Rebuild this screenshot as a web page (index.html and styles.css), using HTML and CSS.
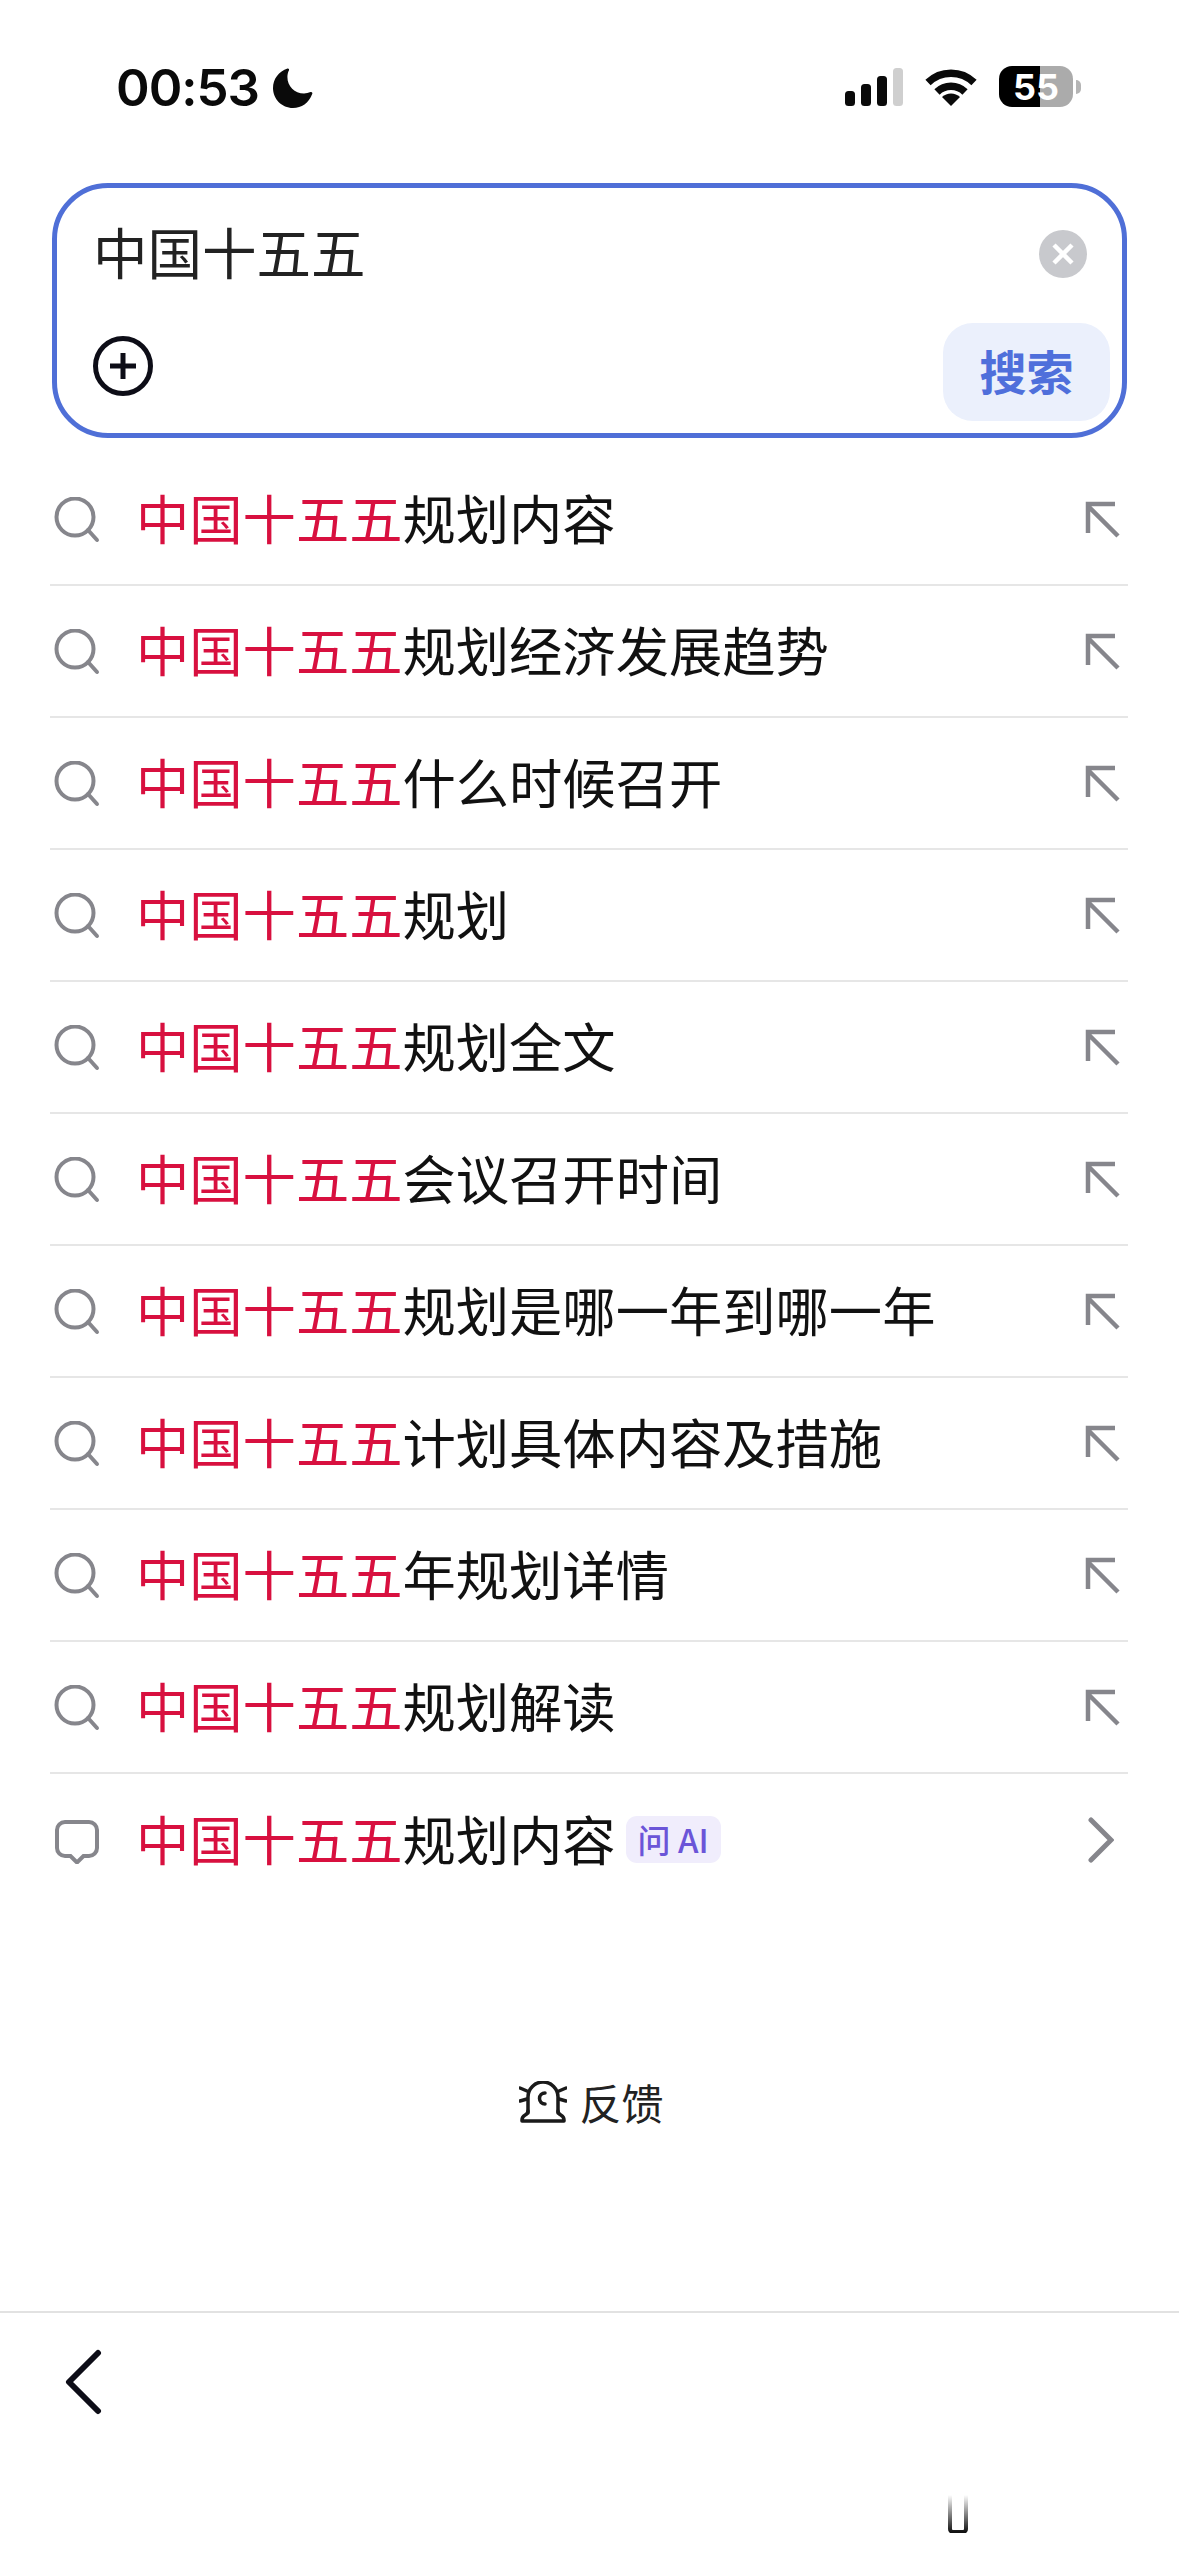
FILE: index.html
```html
<!DOCTYPE html>
<html lang="zh-CN">
<head>
<meta charset="utf-8">
<title>搜索</title>
<link rel="stylesheet" href="styles.css">
</head>
<body>
<div class="page">
  <header class="status">
    <div class="status-left">
      <span class="time">00:53</span>
      <svg class="moon" viewBox="0 0 40 40"><path d="M14.5 0.5C15.6 0.2 16.4 1.2 16 2.2C14.9 4.2 14.4 6.6 14.4 9C14.4 18.300 21.600 25.500 31 25.500C33.300 25.500 35.500 25 37.500 24.100C38.800 23.600 39.900 24.800 39.200 26C35.700 35.300 28.600 40 20 40C8.900 40 0 31.100 0 20C0 11 5.900 3.200 14.500 0.500Z"/></svg>
    </div>
    <div class="status-right">
      <svg class="signal" viewBox="0 0 58 38"><rect x="0" y="23" width="10" height="15" rx="3.500"/><rect x="16" y="16" width="10" height="22" rx="3.500"/><rect x="32" y="8" width="10" height="30" rx="3.500"/><rect class="signal-off" x="48" y="0" width="10" height="38" rx="3.500"/></svg>
      <svg class="wifi" viewBox="0 0 52 38"><path class="wifi-arc" d="M3 14.500A33 33 0 0 1 49 14.500"/><path class="wifi-arc" d="M12 24A20 20 0 0 1 40 24"/><path d="M17 29A13 13 0 0 1 35 29L26 38Z"/></svg>
      <div class="battery">
        <div class="battery-body"><span class="battery-num">55</span></div>
        <span class="battery-nub"></span>
      </div>
    </div>
  </header>

  <section class="search">
    <div class="search-top">
      <span class="query">中国十五五</span>
      <svg class="clear" viewBox="0 0 48 48"><circle cx="24" cy="24" r="24"/><path d="M15 15L33 33M33 15L15 33"/></svg>
    </div>
    <div class="search-bottom">
      <svg class="plus" viewBox="0 0 60 60"><circle cx="30" cy="30" r="27.500"/><path d="M17 30H43M30 17V43"/></svg>
      <button class="search-btn"><span class="search-btn-text">搜索</span></button>
    </div>
  </section>

  <ul class="list">
    <li class="row"><svg class="lead" viewBox="0 0 46 46"><circle cx="21" cy="20" r="18.500"/><path d="M34 33L43 43"/></svg><span class="label"><em>中国十五五</em>规划内容</span><svg class="arrow" viewBox="0 0 36 38"><path d="M33 35L3 5M3 32V3H30"/></svg></li>
    <li class="row"><svg class="lead" viewBox="0 0 46 46"><circle cx="21" cy="20" r="18.500"/><path d="M34 33L43 43"/></svg><span class="label"><em>中国十五五</em>规划经济发展趋势</span><svg class="arrow" viewBox="0 0 36 38"><path d="M33 35L3 5M3 32V3H30"/></svg></li>
    <li class="row"><svg class="lead" viewBox="0 0 46 46"><circle cx="21" cy="20" r="18.500"/><path d="M34 33L43 43"/></svg><span class="label"><em>中国十五五</em>什么时候召开</span><svg class="arrow" viewBox="0 0 36 38"><path d="M33 35L3 5M3 32V3H30"/></svg></li>
    <li class="row"><svg class="lead" viewBox="0 0 46 46"><circle cx="21" cy="20" r="18.500"/><path d="M34 33L43 43"/></svg><span class="label"><em>中国十五五</em>规划</span><svg class="arrow" viewBox="0 0 36 38"><path d="M33 35L3 5M3 32V3H30"/></svg></li>
    <li class="row"><svg class="lead" viewBox="0 0 46 46"><circle cx="21" cy="20" r="18.500"/><path d="M34 33L43 43"/></svg><span class="label"><em>中国十五五</em>规划全文</span><svg class="arrow" viewBox="0 0 36 38"><path d="M33 35L3 5M3 32V3H30"/></svg></li>
    <li class="row"><svg class="lead" viewBox="0 0 46 46"><circle cx="21" cy="20" r="18.500"/><path d="M34 33L43 43"/></svg><span class="label"><em>中国十五五</em>会议召开时间</span><svg class="arrow" viewBox="0 0 36 38"><path d="M33 35L3 5M3 32V3H30"/></svg></li>
    <li class="row"><svg class="lead" viewBox="0 0 46 46"><circle cx="21" cy="20" r="18.500"/><path d="M34 33L43 43"/></svg><span class="label"><em>中国十五五</em>规划是哪一年到哪一年</span><svg class="arrow" viewBox="0 0 36 38"><path d="M33 35L3 5M3 32V3H30"/></svg></li>
    <li class="row"><svg class="lead" viewBox="0 0 46 46"><circle cx="21" cy="20" r="18.500"/><path d="M34 33L43 43"/></svg><span class="label"><em>中国十五五</em>计划具体内容及措施</span><svg class="arrow" viewBox="0 0 36 38"><path d="M33 35L3 5M3 32V3H30"/></svg></li>
    <li class="row"><svg class="lead" viewBox="0 0 46 46"><circle cx="21" cy="20" r="18.500"/><path d="M34 33L43 43"/></svg><span class="label"><em>中国十五五</em>年规划详情</span><svg class="arrow" viewBox="0 0 36 38"><path d="M33 35L3 5M3 32V3H30"/></svg></li>
    <li class="row"><svg class="lead" viewBox="0 0 46 46"><circle cx="21" cy="20" r="18.500"/><path d="M34 33L43 43"/></svg><span class="label"><em>中国十五五</em>规划解读</span><svg class="arrow" viewBox="0 0 36 38"><path d="M33 35L3 5M3 32V3H30"/></svg></li>
    <li class="row row-last"><svg class="lead" viewBox="0 0 46 46"><path d="M11 4H35A8 8 0 0 1 43 12V30A8 8 0 0 1 35 38H29.500L23 44.500L16.500 38H11A8 8 0 0 1 3 30V12A8 8 0 0 1 11 4Z"/></svg><span class="label"><em>中国十五五</em>规划内容</span><span class="badge">问 AI</span><svg class="chevron" viewBox="0 0 26 46"><path d="M3 3L23 23L3 43"/></svg></li>
  </ul>

  <div class="feedback">
    <svg class="alarm" viewBox="0 0 48 42"><path class="alarm-line" d="M9 32V16A15 15 0 0 1 39 16V32"/><path class="alarm-line" d="M9 30C9 35 3 33 3 39V40H45V39C45 33 39 35 39 30"/><path class="alarm-line" d="M26 12A5.500 5.500 0 0 0 26 23M1 7L8 10M1 20L8 18M47 7L40 10M47 20L40 18"/></svg>
    <span class="feedback-text">反馈</span>
  </div>

  <footer class="bottom">
    <svg class="back" viewBox="0 0 38 66"><path d="M34 4L5 33L34 62"/></svg>
  </footer>

  <svg class="mark" viewBox="0 0 20 38"><defs><linearGradient id="fade" x1="0" y1="0" x2="0" y2="1"><stop offset="0" stop-color="#111" stop-opacity="0"/><stop offset="1" stop-color="#111"/></linearGradient></defs><path d="M2 0V34A3 3 0 0 0 5 37H15A3 3 0 0 0 18 34V0" stroke="url(#fade)"/></svg>
</div>
</body>
</html>
```

FILE: styles.css
```css
* { box-sizing: border-box; }
html, body { margin: 0; padding: 0; background: #fff; }
body { font-family: "Noto Sans CJK SC", "Noto Sans", sans-serif; color: #111; }

.page {
  position: relative;
  width: 1179px;
  height: 2556px;
  overflow: hidden;
  display: flex;
  flex-direction: column;
}

/* status bar */
.status {
  height: 183px;
  flex: none;
  padding: 66px 98px 0 116px;
  display: flex;
  justify-content: space-between;
  align-items: flex-start;
}
.status-left { display: flex; align-items: center; gap: 14px; }
.time {
  font-family: Inter, "Liberation Sans", sans-serif;
  font-size: 51px;
  line-height: 44px;
  font-weight: 600;
  letter-spacing: -1px;
  color: #0a0a0a;
}
.moon { width: 40px; height: 40px; fill: #0a0a0a; }
.status-right { display: flex; align-items: center; gap: 22px; }
.signal { width: 58px; height: 38px; fill: #0a0a0a; }
.signal-off { fill: #cfcfcf; }
.wifi { width: 52px; height: 38px; fill: #0a0a0a; }
.wifi-arc { fill: none; stroke: #0a0a0a; stroke-width: 7.500; }
.battery { display: flex; align-items: center; gap: 3px; }
.battery-body {
  width: 74px;
  height: 41px;
  border-radius: 13px;
  background: linear-gradient(90deg, #000 0, #000 41px, #ababab 41px, #ababab 100%);
  display: flex;
  align-items: center;
  justify-content: center;
}
.battery-num {
  font-family: Inter, "Liberation Sans", sans-serif;
  font-size: 36px;
  line-height: 36px;
  font-weight: 700;
  color: #fff;
}
.battery-nub {
  width: 5px;
  height: 14px;
  background: #b5b5b5;
  border-radius: 0 6px 6px 0;
}

/* search */
.search {
  flex: none;
  width: 1075px;
  height: 255px;
  margin-left: 52px;
  border: 5px solid #4f6fd7;
  border-radius: 56px;
  padding: 25px 12px 12px 36px;
  display: flex;
  flex-direction: column;
  justify-content: space-between;
}
.search-top { display: flex; align-items: center; justify-content: space-between; padding-right: 23px; }
.query { font-size: 54.500px; line-height: 76px; color: #222; }
.clear { width: 48px; height: 48px; margin-top: 6px; }
.clear circle { fill: #c8c9cd; }
.clear path { stroke: #fff; stroke-width: 4.500; fill: none; }
.search-bottom { display: flex; align-items: center; justify-content: space-between; }
.plus { width: 60px; height: 60px; margin-top: -12px; }
.plus circle { fill: none; stroke: #0d0d17; stroke-width: 5; }
.plus path { stroke: #0d0d17; stroke-width: 5; fill: none; }
.search-btn {
  width: 167px;
  height: 98px;
  border: 0;
  padding: 0 0 6px;
  border-radius: 30px;
  background: #ebf0fc;
  color: #4f6fdb;
  font-family: "Noto Sans CJK SC", sans-serif;
  font-size: 47px;
  font-weight: 700;
}

/* list */
.list { list-style: none; margin: 16px 51px 0 50px; padding: 0; }
.row {
  height: 132px;
  border-bottom: 2px solid #e6e6e6;
  display: flex;
  align-items: center;
  position: relative;
}
.row-last { border-bottom: 0; }
.lead {
  flex: none;
  width: 46px;
  height: 46px;
  margin-left: 4px;
  margin-right: 36px;
  margin-top: 2px;
  fill: none;
  stroke: #86868c;
  stroke-width: 4;
  stroke-linecap: round;
}
.label { font-size: 53.300px; line-height: 76px; margin-bottom: 4px; color: #111; white-space: nowrap; }
.label em { font-style: normal; color: #d8103f; }
.arrow {
  flex: none;
  margin-left: auto;
  margin-right: 7px;
  margin-top: 2px;
  width: 36px;
  height: 38px;
  fill: none;
  stroke: #86868c;
  stroke-width: 4.500;
}
.chevron {
  flex: none;
  margin-left: auto;
  margin-right: 14px;
  width: 26px;
  height: 46px;
  fill: none;
  stroke: #86868c;
  stroke-width: 5;
  stroke-linecap: round;
}
.badge {
  flex: none;
  margin-left: 10px;
  margin-bottom: 2px;
  width: 95px;
  height: 47px;
  border-radius: 11px;
  background: #f0edfc;
  color: #6b55d8;
  font-size: 33px;
  font-weight: 500;
  line-height: 47px;
  text-align: center;
}

/* feedback */
.feedback {
  flex: none;
  margin-top: 166px;
  padding-left: 4px;
  display: flex;
  justify-content: center;
  align-items: center;
  gap: 12px;
  height: 60px;
}
.alarm { width: 48px; height: 42px; }
.alarm-line { fill: none; stroke: #1a1a1a; stroke-width: 3.500; stroke-linecap: round; stroke-linejoin: round; }
.feedback-text { font-size: 42px; line-height: 60px; color: #222; }

/* bottom bar */
.bottom {
  flex: none;
  margin-top: auto;
  height: 245px;
  border-top: 2px solid #e2e2e2;
  padding: 36px 0 0 64px;
}
.back { display: block; width: 38px; height: 66px; fill: none; stroke: #0d0d17; stroke-width: 6; stroke-linecap: round; stroke-linejoin: round; }

.mark {
  position: absolute;
  left: 948px;
  top: 2495px;
  width: 20px;
  height: 38px;
  fill: none;
  stroke-width: 4;
}
```
